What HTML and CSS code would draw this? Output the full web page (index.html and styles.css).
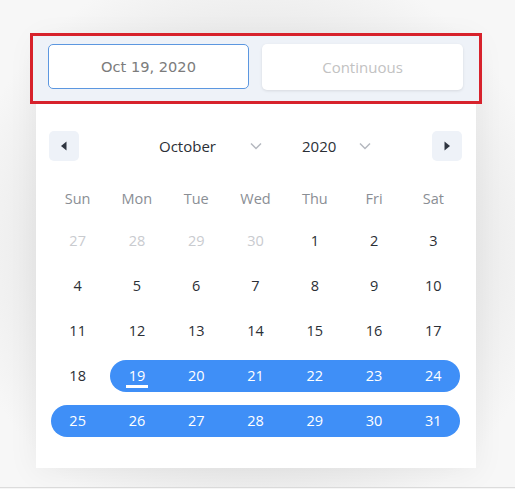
FILE: index.html
```html
<!DOCTYPE html>
<html>
<head>
<meta charset="utf-8">
<link rel="stylesheet" href="styles.css">
</head>
<body>
<div class="page">
  <div class="card">
    <div class="header">
      <div class="btn btn-active">Oct 19, 2020</div>
      <div class="btn btn-muted">Continuous</div>
    </div>
    <div class="nav">
      <div class="navbtn"><svg width="8" height="10" viewBox="0 0 8 10"><path d="M6.5 0.5 L1 5 L6.5 9.5 Z" fill="#2f3540"/></svg></div>
      <div class="selects">
        <div class="sel sel-month"><span>October</span><svg width="12" height="8" viewBox="0 0 12 8"><path d="M1 1.5 L6 6.5 L11 1.5" fill="none" stroke="#b4b8bf" stroke-width="1.5"/></svg></div>
        <div class="sel sel-year"><span>2020</span><svg width="12" height="8" viewBox="0 0 12 8"><path d="M1 1.5 L6 6.5 L11 1.5" fill="none" stroke="#b4b8bf" stroke-width="1.5"/></svg></div>
      </div>
      <div class="navbtn"><svg width="8" height="10" viewBox="0 0 8 10"><path d="M1.5 0.5 L7 5 L1.5 9.5 Z" fill="#2f3540"/></svg></div>
    </div>
    <div class="grid weekdays">
      <div class="wd">Sun</div><div class="wd">Mon</div><div class="wd">Tue</div><div class="wd">Wed</div><div class="wd">Thu</div><div class="wd">Fri</div><div class="wd">Sat</div>
    </div>
    <div class="grid days">
      <div class="cell"><div class="d off">27</div></div>
      <div class="cell"><div class="d off">28</div></div>
      <div class="cell"><div class="d off">29</div></div>
      <div class="cell"><div class="d off">30</div></div>
      <div class="cell"><div class="d">1</div></div>
      <div class="cell"><div class="d">2</div></div>
      <div class="cell"><div class="d">3</div></div>

      <div class="cell"><div class="d">4</div></div>
      <div class="cell"><div class="d">5</div></div>
      <div class="cell"><div class="d">6</div></div>
      <div class="cell"><div class="d">7</div></div>
      <div class="cell"><div class="d">8</div></div>
      <div class="cell"><div class="d">9</div></div>
      <div class="cell"><div class="d">10</div></div>

      <div class="cell"><div class="d">11</div></div>
      <div class="cell"><div class="d">12</div></div>
      <div class="cell"><div class="d">13</div></div>
      <div class="cell"><div class="d">14</div></div>
      <div class="cell"><div class="d">15</div></div>
      <div class="cell"><div class="d">16</div></div>
      <div class="cell"><div class="d">17</div></div>

      <div class="cell"><div class="d">18</div></div>
      <div class="cell"><div class="d sel-d start"><span class="today">19</span></div></div>
      <div class="cell"><div class="d sel-d">20</div></div>
      <div class="cell"><div class="d sel-d">21</div></div>
      <div class="cell"><div class="d sel-d">22</div></div>
      <div class="cell"><div class="d sel-d">23</div></div>
      <div class="cell"><div class="d sel-d end">24</div></div>

      <div class="cell"><div class="d sel-d start">25</div></div>
      <div class="cell"><div class="d sel-d">26</div></div>
      <div class="cell"><div class="d sel-d">27</div></div>
      <div class="cell"><div class="d sel-d">28</div></div>
      <div class="cell"><div class="d sel-d">29</div></div>
      <div class="cell"><div class="d sel-d">30</div></div>
      <div class="cell"><div class="d sel-d end">31</div></div>
    </div>
  </div>
</div>
</body>
</html>
```
FILE: styles.css
```css
html, body {
  margin: 0;
  padding: 0;
}
body {
  background: #f6f6f6;
  font-family: "Open Sans", "Noto Sans", sans-serif;
}
.page {
  height: 488px;
  border-bottom: 1px solid #dcdcdc;
  padding-top: 36px;
  box-sizing: border-box;
  background: radial-gradient(ellipse 300px 300px at 256px 250px, #e6e6e6 60%, #f7f7f7 100%);
}
.card {
  width: 440px;
  margin-left: 36px;
  background: #fff;
  padding-bottom: 25px;
  box-shadow: 0 4px 30px rgba(0,0,0,0.06);
}
.header {
  margin: 0 -3px;
  height: 65px;
  box-sizing: border-box;
  padding: 8px 16px 0 15px;
  background: #eef2f8;
  outline: 3px solid #d7222c;
  display: flex;
  gap: 13px;
}
.btn {
  width: 201px;
  height: 45px;
  box-sizing: border-box;
  background: #fff;
  border-radius: 5px;
  display: flex;
  align-items: center;
  justify-content: center;
  font-size: 15px;
}
.btn-active {
  border: 1px solid #5c97e0;
  color: #7c7c7c;
  font-family: "DejaVu Sans", "Open Sans", sans-serif;
  font-size: 14.6px;
}
.btn-muted {
  color: #c2c2c2;
  box-shadow: 0 1px 3px rgba(0,0,0,0.1);
  height: 46px;
}
.nav {
  display: flex;
  align-items: center;
  margin: 30px 14px 0 13px;
  height: 30px;
}
.navbtn {
  width: 30px;
  height: 30px;
  background: #eef2f8;
  border-radius: 5px;
  display: flex;
  align-items: center;
  justify-content: center;
}
.selects {
  flex: 1;
  display: flex;
  align-items: center;
  padding-left: 80px;
  font-size: 15px;
  color: #2b2f36;
}
.sel {
  display: flex;
  align-items: center;
  justify-content: space-between;
}
.sel-month {
  width: 103px;
  margin-right: 40px;
}
.sel-year {
  width: 69px;
}
.grid {
  display: grid;
  grid-template-columns: repeat(7, 1fr);
  margin: 0 13px 0 12px;
}
.weekdays {
  margin-top: 18px;
  height: 39px;
}
.wd {
  display: flex;
  align-items: center;
  justify-content: center;
  font-size: 14.5px;
  color: #8a8e94;
}
.cell {
  height: 45px;
  display: flex;
  align-items: center;
}
.d {
  flex: 1;
  height: 32px;
  line-height: 32px;
  text-align: center;
  font-size: 14.5px;
  color: #2b2f36;
}
.d.off {
  color: #c9cbcf;
}
.d.sel-d {
  background: #3f8ff7;
  color: #fff;
}
.d.start {
  margin-left: 3px;
  padding-right: 3px;
  border-radius: 16px 0 0 16px;
}
.d.end {
  margin-right: 3px;
  padding-left: 3px;
  border-radius: 0 16px 16px 0;
}
.today {
  position: relative;
}
.today::after {
  content: "";
  position: absolute;
  left: -3px;
  right: -3px;
  bottom: -3px;
  height: 3px;
  background: #fff;
}
```
